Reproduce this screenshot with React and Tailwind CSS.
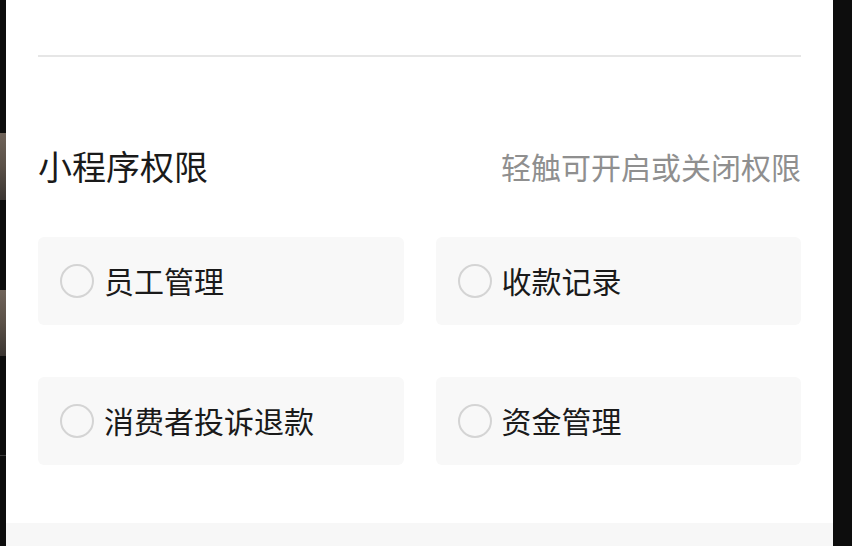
import React from "react";

const items = ["员工管理", "收款记录", "消费者投诉退款", "资金管理"];

export default function App() {
  return (
    <div
      className="w-[852px] h-[546px] overflow-hidden flex bg-[#0d0d0d]"
      style={{ fontFamily: '"Noto Sans CJK SC", "Noto Sans", sans-serif' }}
    >
      {/* left edge of the page behind the sheet */}
      <div className="w-[6px] shrink-0 flex flex-col">
        <div className="h-[133px]" />
        <div className="h-[67px] bg-gradient-to-b from-[#6f6359] via-[#5a5047] to-[#3b3632]" />
        <div className="h-[90px]" />
        <div className="h-[66px] bg-gradient-to-b from-[#6f6359] via-[#5a5047] to-[#3b3632]" />
        <div className="h-[99px]" />
        <div className="h-[1px] bg-[#3a3a3a]" />
      </div>

      {/* sheet */}
      <div className="w-[827px] shrink-0 bg-white flex flex-col">
        <div className="px-[32px]">
          <div className="mt-[55px] h-[2px] bg-[#e6e6e6]" />

          <div className="mt-[90px] h-[40px] flex items-center justify-between">
            <h2 className="mb-[2px] text-[34px] leading-none text-[#1a1a1a]">小程序权限</h2>
            <span className="mb-[2px] text-[30px] leading-none text-[#8f8f8f]">轻触可开启或关闭权限</span>
          </div>

          <div className="mt-[50px] grid grid-cols-2 gap-x-[32px] gap-y-[52px]">
            {items.map((name) => (
              <button
                key={name}
                className="h-[88px] rounded-[6px] bg-[#f8f8f8] flex items-center pl-[22px] text-left"
              >
                <span className="w-[34px] h-[34px] rounded-full border-2 border-[#d4d4d4] shrink-0" />
                <span className="ml-[10px] mb-[3px] text-[30px] leading-none text-[#1a1a1a]">{name}</span>
              </button>
            ))}
          </div>
        </div>

        <div className="mt-[58px] flex-1 bg-[#f7f7f7]" />
      </div>

      <div className="flex-1" />
    </div>
  );
}
